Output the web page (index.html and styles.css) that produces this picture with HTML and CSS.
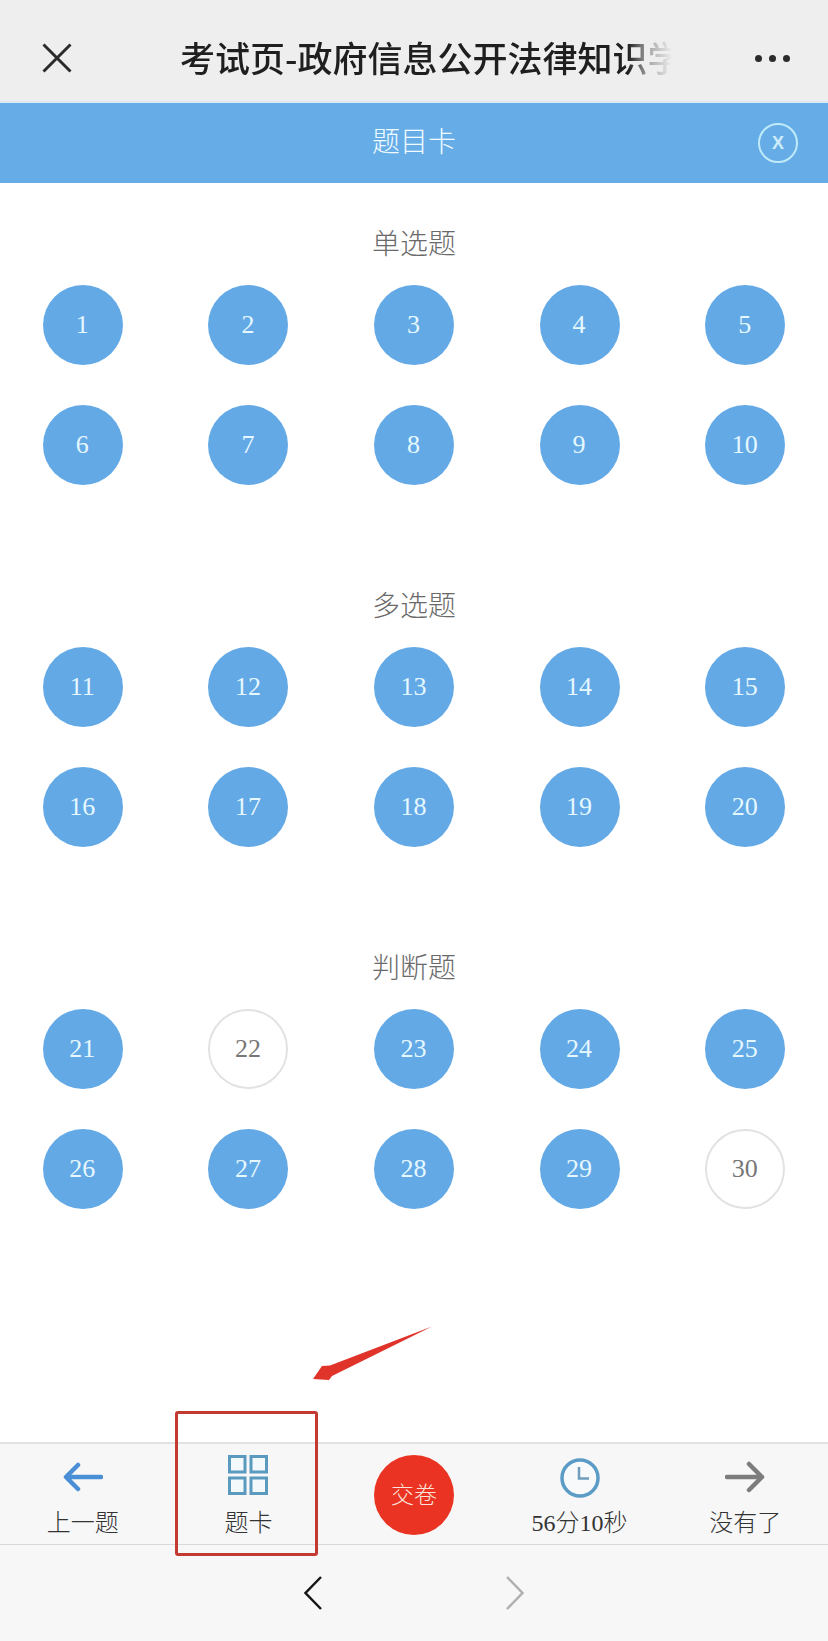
FILE: index.html
```html
<!DOCTYPE html>
<html lang="zh-CN">
<head>
<meta charset="utf-8">
<title>题目卡</title>
<link rel="stylesheet" href="styles.css">
</head>
<body>
<div class="page">
  <header class="topbar">
    <svg class="top-close" viewBox="0 0 30 30"><path d="M1.5 1.5 28.5 28.5M28.5 1.5 1.5 28.5"/></svg>
    <h1 class="page-title">考试页-政府信息公开法律知识学</h1>
    <div class="more"><i></i><i></i><i></i></div>
  </header>
  <div class="sheet-bar">
    <span class="sheet-title">题目卡</span>
    <span class="sheet-close">X</span>
  </div>
  <main class="sheet">
    <section class="group">
      <h2 class="group-title">单选题</h2>
      <div class="grid">
        <span class="num">1</span><span class="num">2</span><span class="num">3</span><span class="num">4</span><span class="num">5</span>
        <span class="num">6</span><span class="num">7</span><span class="num">8</span><span class="num">9</span><span class="num">10</span>
      </div>
    </section>
    <section class="group">
      <h2 class="group-title">多选题</h2>
      <div class="grid">
        <span class="num">11</span><span class="num">12</span><span class="num">13</span><span class="num">14</span><span class="num">15</span>
        <span class="num">16</span><span class="num">17</span><span class="num">18</span><span class="num">19</span><span class="num">20</span>
      </div>
    </section>
    <section class="group">
      <h2 class="group-title">判断题</h2>
      <div class="grid">
        <span class="num">21</span><span class="num empty">22</span><span class="num">23</span><span class="num">24</span><span class="num">25</span>
        <span class="num">26</span><span class="num">27</span><span class="num">28</span><span class="num">29</span><span class="num empty">30</span>
      </div>
    </section>
  </main>
  <footer class="toolbar">
    <div class="tool">
      <svg class="tool-icon" viewBox="0 0 40 40"><path class="ico-blue" d="M38 19H5M15 7 3 19 15 31"/></svg>
      <span class="tool-label">上一题</span>
    </div>
    <div class="tool">
      <svg class="tool-icon tool-icon-grid" viewBox="0 0 40 40"><g class="ico-grid"><rect x="1.500" y="1.500" width="15.500" height="15.500"/><rect x="23" y="1.500" width="15.500" height="15.500"/><rect x="1.500" y="23" width="15.500" height="15.500"/><rect x="23" y="23" width="15.500" height="15.500"/></g></svg>
      <span class="tool-label">题卡</span>
    </div>
    <div class="tool">
      <span class="submit">交卷</span>
    </div>
    <div class="tool">
      <svg class="tool-icon" viewBox="0 0 40 40"><circle class="ico-clock" cx="20" cy="20" r="18"/><path class="ico-hand" d="M19 9V20.500H29"/></svg>
      <span class="tool-label">56分10秒</span>
    </div>
    <div class="tool">
      <svg class="tool-icon" viewBox="0 0 40 40"><path class="ico-grey" d="M2 19H37M24 6 37 19 24 32"/></svg>
      <span class="tool-label">没有了</span>
    </div>
  </footer>
  <nav class="browser-nav">
    <svg class="chev" viewBox="0 0 18 34"><path d="M17 1 1.500 17 17 33"/></svg>
    <svg class="chev chev-off" viewBox="0 0 18 34"><path d="M1 1 16.500 17 1 33"/></svg>
  </nav>
  <div class="mark-box"></div>
  <svg class="mark-arrow" viewBox="0 0 120 56"><path d="M119 .5 17 39.500 9 40 0 53 16 54 19 50Z"/></svg>
</div>
</body>
</html>
```

FILE: styles.css
```css
* { box-sizing: border-box; }
html, body { margin: 0; padding: 0; }
body {
  background: #fff;
  font-family: "Liberation Serif", "Noto Sans CJK SC", serif;
}
.page {
  position: relative;
  width: 828px;
  height: 1641px;
  display: flex;
  flex-direction: column;
  overflow: hidden;
}
.topbar {
  height: 103px;
  flex: none;
  background: #eeeeee;
  border-bottom: 2px solid #dbe9f3;
  display: flex;
  align-items: center;
  padding: 16px 38px 0 42px;
}
.top-close {
  width: 30px;
  height: 30px;
  flex: none;
  margin-top: -2px;
}
.top-close path { fill: none; stroke: #2b2b2b; stroke-width: 3; }
.page-title {
  flex: none;
  width: 506px;
  margin: -4px 0 0 108px;
  font-family: "Noto Sans CJK SC", sans-serif;
  font-size: 35px;
  font-weight: 500;
  line-height: 46px;
  color: #1f1f1f;
  white-space: nowrap;
  -webkit-mask-image: linear-gradient(90deg, #000 448px, rgba(0, 0, 0, .35) 468px, transparent 492px);
  mask-image: linear-gradient(90deg, #000 448px, rgba(0, 0, 0, .35) 468px, transparent 492px);
}
.more {
  margin-left: auto;
  display: flex;
  gap: 7px;
}
.more i {
  display: block;
  width: 7px;
  height: 7px;
  border-radius: 50%;
  background: #2b2b2b;
}
.sheet-bar {
  position: relative;
  height: 80px;
  flex: none;
  background: #66ace6;
  display: flex;
  align-items: center;
  justify-content: center;
  padding-bottom: 6px;
}
.sheet-title {
  font-family: "Noto Sans CJK SC", sans-serif;
  font-weight: 300;
  font-size: 28px;
  color: #f0fbff;
}
.sheet-close {
  position: absolute;
  right: 30px;
  top: 20px;
  width: 40px;
  height: 40px;
  border: 2px solid #bfeaf8;
  border-radius: 50%;
  display: flex;
  align-items: center;
  justify-content: center;
  font-family: "Liberation Sans Narrow", "Liberation Sans", sans-serif;
  font-weight: 700;
  font-size: 18px;
  line-height: 1;
  color: #cdeefa;
}
.sheet {
  flex: 1;
  min-height: 0;
  padding-top: 40px;
  display: flex;
  flex-direction: column;
  gap: 100px;
}
.group-title {
  margin: 0 0 22px;
  height: 40px;
  line-height: 38px;
  text-align: center;
  font-family: "Noto Sans CJK SC", sans-serif;
  font-size: 28px;
  font-weight: 300;
  color: #6a6a6a;
}
.grid {
  display: grid;
  grid-template-columns: repeat(5, 1fr);
  row-gap: 40px;
  justify-items: center;
}
.num {
  width: 80px;
  height: 80px;
  border-radius: 50%;
  background: #63a9e6;
  color: #e6f8ff;
  font-size: 26px;
  display: flex;
  align-items: center;
  justify-content: center;
  padding: 0 1px 1px 0;
}
.num.empty {
  background: #fff;
  border: 2px solid #e2e2e2;
  color: #777;
}
.toolbar {
  height: 103px;
  flex: none;
  background: #f7f7f7;
  border-top: 2px solid #e2e2e2;
  border-bottom: 1px solid #d9d9d9;
  display: grid;
  grid-template-columns: repeat(5, 1fr);
}
.tool {
  display: flex;
  flex-direction: column;
  align-items: center;
  padding-top: 14px;
}
.tool-icon {
  width: 40px;
  height: 40px;
  flex: none;
}
.tool-icon-grid {
  margin: -3px 0 3px;
}
.tool-label {
  margin-top: 10px;
  font-size: 24px;
  font-weight: 300;
  line-height: 30px;
  color: #333;
  white-space: nowrap;
}
.ico-blue { fill: none; stroke: #4a8fd6; stroke-width: 4.500; stroke-linecap: round; stroke-linejoin: round; }
.ico-grey { fill: none; stroke: #7d7d7d; stroke-width: 4.500; stroke-linecap: round; stroke-linejoin: round; }
.ico-grid rect { fill: #f3f8fb; stroke: #5b9abf; stroke-width: 3; }
.ico-clock { fill: #f7f9fb; stroke: #5a9cc6; stroke-width: 3.500; }
.ico-hand { fill: none; stroke: #6f9dbb; stroke-width: 2.500; }
.submit {
  width: 80px;
  height: 80px;
  margin-top: -3px;
  flex: none;
  border-radius: 50%;
  background: #ea3323;
  color: #fbe3da;
  font-family: "Noto Sans CJK SC", sans-serif;
  font-weight: 300;
  font-size: 23px;
  display: flex;
  align-items: center;
  justify-content: center;
  padding-bottom: 4px;
}
.browser-nav {
  flex: 0 0 96px;
  background: #f7f7f7;
  display: flex;
  align-items: center;
  justify-content: center;
  gap: 184px;
}
.chev {
  width: 18px;
  height: 34px;
  flex: none;
  margin-top: -1px;
}
.chev path { fill: none; stroke: #161616; stroke-width: 2.500; }
.chev-off path { stroke: #b0b0b0; }
.mark-box {
  position: absolute;
  left: 175px;
  top: 1411px;
  width: 143px;
  height: 145px;
  border: 3px solid #c23a32;
  border-radius: 3px;
}
.mark-arrow {
  position: absolute;
  left: 313px;
  top: 1326px;
  width: 120px;
  height: 56px;
}
.mark-arrow path { fill: #e0332a; }
```
